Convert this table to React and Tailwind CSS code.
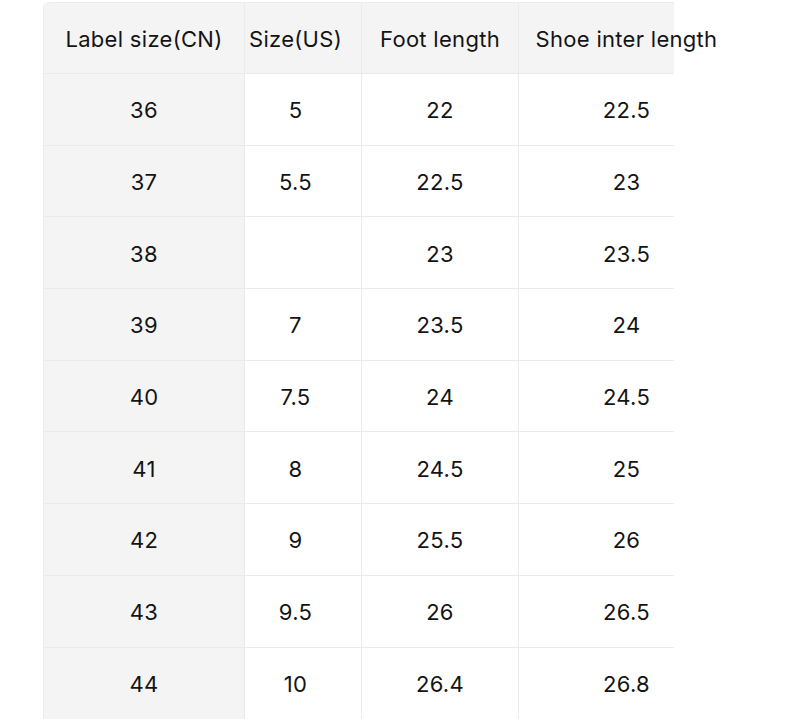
import React from "react";

const rows = [
  ["36", "5", "22", "22.5"],
  ["37", "5.5", "22.5", "23"],
  ["38", "", "23", "23.5"],
  ["39", "7", "23.5", "24"],
  ["40", "7.5", "24", "24.5"],
  ["41", "8", "24.5", "25"],
  ["42", "9", "25.5", "26"],
  ["43", "9.5", "26", "26.5"],
  ["44", "10", "26.4", "26.8"],
];

const SizeChart = () => {
  return (
    <div
      className="w-[800px] h-[721px] bg-white pl-[43px] pt-[2px] text-[#141414]"
      style={{ fontFamily: "Inter, 'Noto Sans', sans-serif" }}
    >
      <div className="w-[631px] rounded-tl-[6px] border-l border-t border-[#ececec] text-[22px] tracking-[0.3px]">
        {/* Header */}
        <div className="grid grid-cols-[201px_117px_157px_156px] h-[71px] bg-[#f4f4f4] border-b border-[#ebebeb]">
          <div className="flex items-center justify-center pt-[2px] border-r border-[#ebebeb]">
            Label size(CN)
          </div>
          <div className="flex items-center justify-center pt-[2px] pr-[15px] border-r border-[#ebebeb]">
            Size(US)
          </div>
          <div className="flex items-center justify-center pt-[2px] border-r border-[#ebebeb]">
            Foot length
          </div>
          <div className="flex items-center pt-[2px]">
            <div className="w-[215px] shrink-0 text-center whitespace-nowrap">
              Shoe inter length
            </div>
          </div>
        </div>

        {/* Body */}
        {rows.map((row, index) => (
          <div
            key={index}
            className={`grid grid-cols-[201px_117px_157px_156px] h-[71.7px] ${
              index < rows.length - 1 ? "border-b border-[#ebebeb]" : ""
            }`}
          >
            <div className="flex items-center justify-center pt-[3px] bg-[#f5f4f4] border-r border-[#ebebeb]">
              {row[0]}
            </div>
            <div className="flex items-center justify-center pt-[3px] pr-[15px] border-r border-[#ebebeb]">
              {row[1]}
            </div>
            <div className="flex items-center justify-center pt-[3px] border-r border-[#ebebeb]">
              {row[2]}
            </div>
            <div className="flex items-center pt-[3px]">
              <div className="w-[215px] shrink-0 text-center">{row[3]}</div>
            </div>
          </div>
        ))}
      </div>
    </div>
  );
};

export default SizeChart;
